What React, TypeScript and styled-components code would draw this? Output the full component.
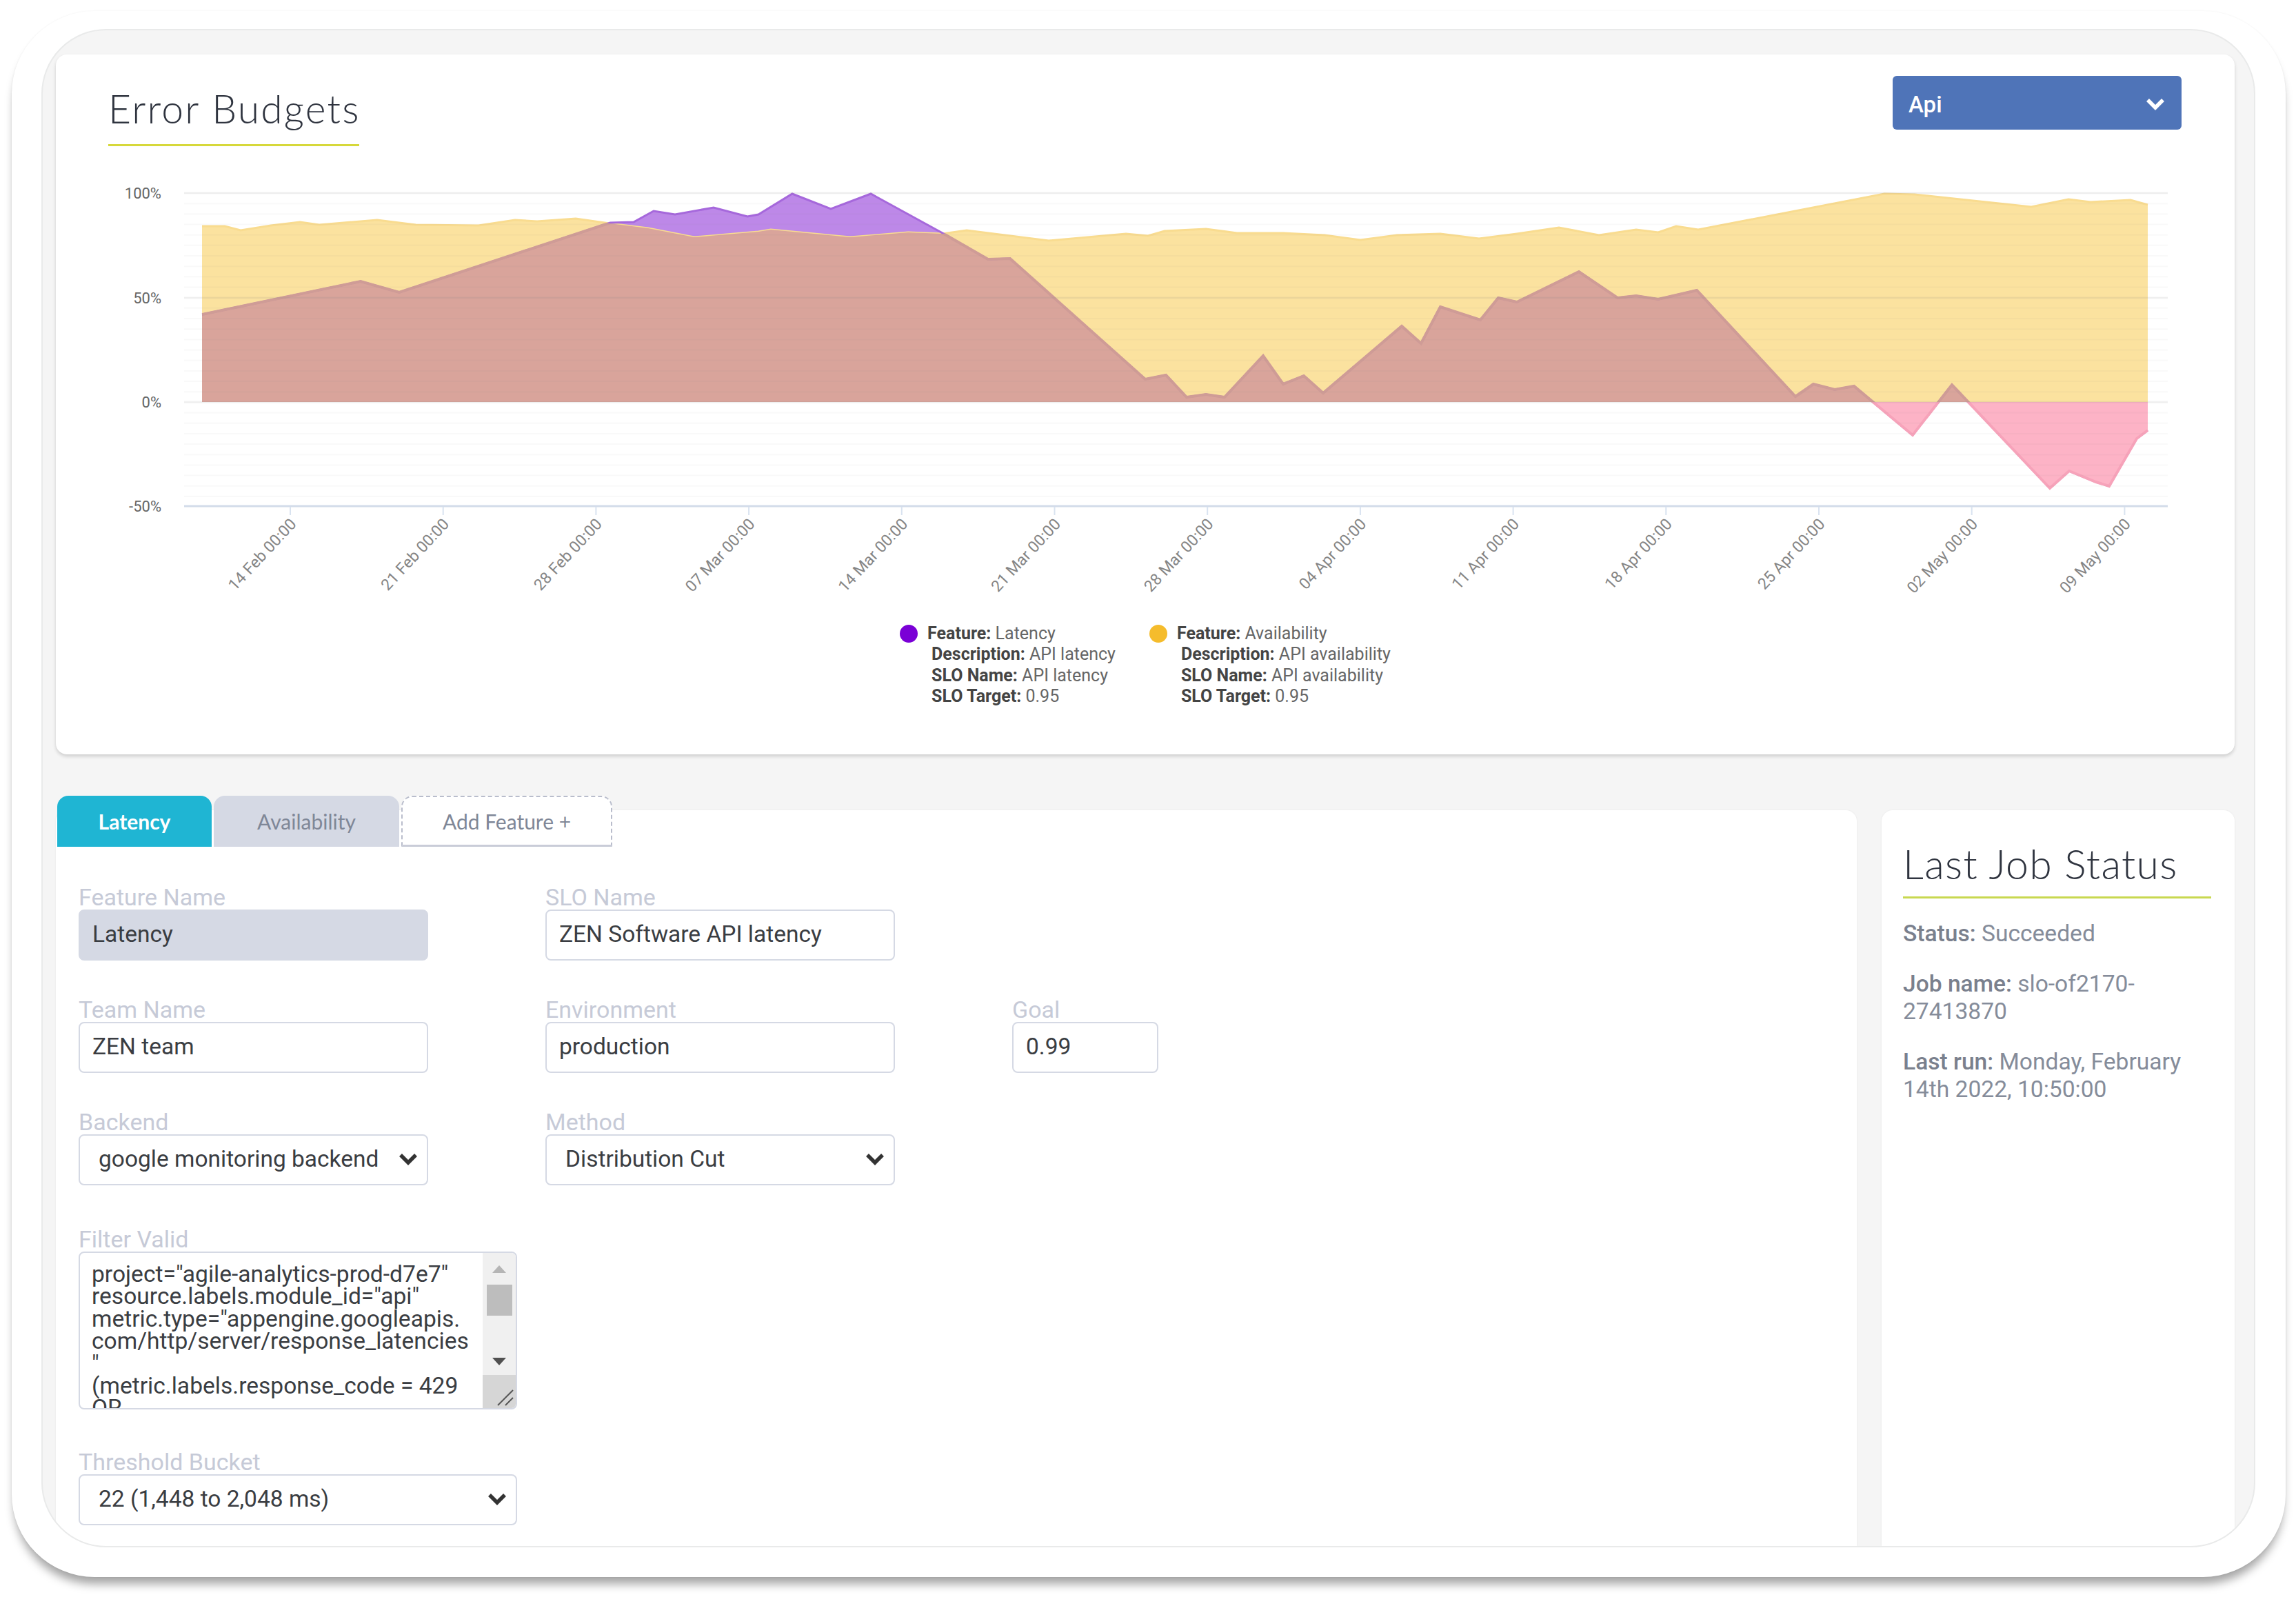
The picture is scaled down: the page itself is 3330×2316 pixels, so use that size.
import styled, { createGlobalStyle } from 'styled-components';

const GlobalStyle = createGlobalStyle`
  html, body {
    margin: 0;
    padding: 0;
    height: 2316px;
    background: #fff;
    overflow: hidden;
  }
  * {
    box-sizing: border-box;
  }
`;

const TITLE_FONT = `Lato, "Noto Sans", sans-serif`;
const BODY_FONT = `Roboto, "Liberation Sans", sans-serif`;

// chart data is in page pixels, the svg viewBox lines them up
const ZERO_Y = 583;
const END_X = 3115;

const availability = [
  [293, 328], [326, 328], [349, 334], [393, 327], [435, 322], [463, 326], [547, 319], [603, 326],
  [694, 327], [747, 319], [779, 321], [835, 317], [884, 324], [940, 331], [1007, 344], [1100, 336],
  [1118, 333], [1233, 344], [1317, 337], [1367, 339], [1402, 334], [1521, 349], [1633, 339],
  [1665, 342], [1689, 335], [1749, 332], [1794, 338], [1861, 338], [1921, 341], [1973, 348],
  [2026, 341], [2089, 339], [2145, 346], [2200, 339], [2261, 330], [2319, 341], [2373, 333],
  [2405, 337], [2431, 328], [2463, 333], [2733, 281], [2777, 282], [2946, 300], [3000, 289],
  [3032, 293], [3090, 290], [3115, 297],
];

const latency = [
  [293, 456], [523, 408], [579, 424], [885, 323], [919, 322], [948, 306], [979, 311], [1035, 301],
  [1084, 314], [1100, 311], [1149, 281], [1205, 303], [1263, 281], [1367, 338], [1433, 376],
  [1465, 375], [1661, 550], [1691, 544], [1721, 576], [1749, 572], [1776, 576], [1832, 516],
  [1861, 557], [1891, 545], [1919, 570], [2033, 473], [2061, 498], [2089, 445], [2147, 464],
  [2173, 432], [2200, 438], [2290, 394], [2346, 432], [2373, 429], [2405, 434], [2461, 421],
  [2604, 575], [2630, 557], [2661, 565], [2689, 560], [2774, 631], [2831, 558], [2973, 708],
  [3001, 683], [3040, 699], [3059, 705], [3099, 636], [3115, 624],
];

const toLine = (pts: number[][]) => pts.map((p) => p.join(',')).join(' ');
const toArea = (pts: number[][]) =>
  `${pts[0][0]},${ZERO_Y} ${toLine(pts)} ${END_X},${ZERO_Y}`;

const dates = [
  '14 Feb', '21 Feb', '28 Feb', '07 Mar', '14 Mar', '21 Mar', '28 Mar',
  '04 Apr', '11 Apr', '18 Apr', '25 Apr', '02 May', '09 May',
];

const yLabels = [
  { y: 280, text: '100%' },
  { y: 432, text: '50%' },
  { y: 583, text: '0%' },
  { y: 734, text: '-50%' },
];

const minorLines = Array.from({ length: 30 }, (_, i) => 280 + i * 15.17);

function BudgetChart() {
  return (
    <ChartSvg viewBox="81 212 3160 680" width="3160" height="680">
      <defs>
        <clipPath id="inAvailability">
          <polygon points={toArea(availability)} />
        </clipPath>
        <clipPath id="belowZero">
          <rect x="200" y={ZERO_Y} width="3000" height="200" />
        </clipPath>
      </defs>

      <polygon points={toArea(latency)} fill="#bd88e8" />
      <polygon points={toArea(availability)} fill="#fbe29f" />
      <polyline points={toLine(availability)} fill="none" stroke="#f9dc90" strokeWidth="3" />
      <g clipPath="url(#inAvailability)">
        <polygon points={toArea(latency)} fill="#d9a49b" />
      </g>
      <polyline points={toLine(latency)} fill="none" stroke="#a668dc" strokeWidth="3" />
      <g clipPath="url(#inAvailability)">
        <polyline points={toLine(latency)} fill="none" stroke="#cf9c96" strokeWidth="4" />
      </g>
      <g clipPath="url(#belowZero)">
        <polygon points={toArea(latency)} fill="#fdb3c6" />
        <polyline points={toLine(latency)} fill="none" stroke="#f7a3ba" strokeWidth="4" />
      </g>

      {minorLines.map((y) => (
        <line key={y} x1="267" x2="3144" y1={y} y2={y} stroke="#8a8a8a" strokeOpacity="0.05" strokeWidth="2" />
      ))}
      {yLabels.slice(0, 3).map((l) => (
        <line key={l.y} x1="267" x2="3144" y1={l.y} y2={l.y} stroke="#8a8a8a" strokeOpacity="0.09" strokeWidth="3" />
      ))}
      <line x1="267" x2="3144" y1="734" y2="734" stroke="#d3dcea" strokeWidth="3" />

      {yLabels.map((l) => (
        <text key={l.y} x="234" y={l.y + 8} textAnchor="end" fontFamily={BODY_FONT} fontSize="22" fill="#666">
          {l.text}
        </text>
      ))}

      {dates.map((d, i) => {
        const x = 421 + i * 221.7;
        return (
          <g key={d}>
            <line x1={x} x2={x} y1="735" y2="747" stroke="#d9e3f0" strokeWidth="2" />
            <text
              x={x + 10}
              y="761"
              textAnchor="end"
              fontFamily={BODY_FONT}
              fontSize="23"
              fill="#858585"
              transform={`rotate(-47 ${x + 10} 761)`}
            >
              {d} 00:00
            </text>
          </g>
        );
      })}
    </ChartSvg>
  );
}

function Chevron({ color = '#333' }: { color?: string }) {
  return (
    <svg width="28" height="18" viewBox="0 0 28 18">
      <polyline points="3,3 14,14 25,3" fill="none" stroke={color} strokeWidth="5.5" />
    </svg>
  );
}

const legendItems = [
  { color: '#7a00d6', feature: 'Latency', description: 'API latency' },
  { color: '#f5bc2c', feature: 'Availability', description: 'API availability' },
];

const filterText = `project="agile-analytics-prod-d7e7"
resource.labels.module_id="api"
metric.type="appengine.googleapis.
com/http/server/response_latencies
"
(metric.labels.response_code = 429
OR`;

export default function App() {
  return (
    <>
      <GlobalStyle />
      <OuterFrame>
        <InnerFrame>
          <TopCard>
            <Header>
              <PageTitle>Error Budgets</PageTitle>
              <ServiceSelect>
                Api
                <Chevron color="#fff" />
              </ServiceSelect>
            </Header>
            <BudgetChart />
            <Legend>
              {legendItems.map((item) => (
                <LegendItem key={item.feature}>
                  <LegendFirstRow>
                    <LegendDot $color={item.color} />
                    <span>
                      <b>Feature:</b> {item.feature}
                    </span>
                  </LegendFirstRow>
                  <LegendRow>
                    <b>Description:</b> {item.description}
                  </LegendRow>
                  <LegendRow>
                    <b>SLO Name:</b> {item.description}
                  </LegendRow>
                  <LegendRow>
                    <b>SLO Target:</b> 0.95
                  </LegendRow>
                </LegendItem>
              ))}
            </Legend>
          </TopCard>

          <LowerRow>
            <FormCard>
              <TabBar>
                <Tab $kind="active">Latency</Tab>
                <Tab $kind="idle">Availability</Tab>
                <Tab $kind="add">Add Feature +</Tab>
              </TabBar>
              <FormGrid>
                <Field>
                  <Label>Feature Name</Label>
                  <Input $disabled>Latency</Input>
                </Field>
                <Field>
                  <Label>SLO Name</Label>
                  <Input>ZEN Software API latency</Input>
                </Field>
                <span />
                <Field>
                  <Label>Team Name</Label>
                  <Input>ZEN team</Input>
                </Field>
                <Field>
                  <Label>Environment</Label>
                  <Input>production</Input>
                </Field>
                <Field>
                  <Label>Goal</Label>
                  <Input>0.99</Input>
                </Field>
                <Field>
                  <Label>Backend</Label>
                  <SelectBox>
                    google monitoring backend
                    <Chevron />
                  </SelectBox>
                </Field>
                <Field>
                  <Label>Method</Label>
                  <SelectBox>
                    Distribution Cut
                    <Chevron />
                  </SelectBox>
                </Field>
              </FormGrid>
              <WideFields>
                <Field>
                  <Label>Filter Valid</Label>
                  <TextAreaBox>
                    <TextAreaBody>{filterText}</TextAreaBody>
                    <ScrollBar>
                      <ScrollTrack>
                        <ScrollArrow $up />
                        <ScrollThumb />
                        <ScrollSpacer />
                        <ScrollArrow />
                      </ScrollTrack>
                      <ResizeCorner>
                        <svg width="26" height="26" viewBox="0 0 26 26">
                          <path d="M3 25L25 3M14 25L25 14" stroke="#555" strokeWidth="2" />
                        </svg>
                      </ResizeCorner>
                    </ScrollBar>
                  </TextAreaBox>
                </Field>
                <Field>
                  <Label>Threshold Bucket</Label>
                  <SelectBox>
                    22 (1,448 to 2,048 ms)
                    <Chevron />
                  </SelectBox>
                </Field>
              </WideFields>
            </FormCard>

            <StatusCard>
              <StatusTitle>Last Job Status</StatusTitle>
              <StatusText>
                <b>Status:</b> Succeeded
              </StatusText>
              <StatusText>
                <b>Job name:</b> slo-of2170-27413870
              </StatusText>
              <StatusText>
                <b>Last run:</b> Monday, February 14th 2022, 10:50:00
              </StatusText>
            </StatusCard>
          </LowerRow>
        </InnerFrame>
      </OuterFrame>
    </>
  );
}

const OuterFrame = styled.div`
  width: 3298px;
  height: 2271px;
  margin: 16px 0 0 17px;
  padding: 26px 44px 43px 43px;
  background: #fff;
  border-radius: 120px;
  box-shadow: 0 14px 14px -4px rgba(0, 0, 0, 0.36), 0 0 3px rgba(0, 0, 0, 0.06);
`;

const InnerFrame = styled.div`
  height: 100%;
  display: flex;
  flex-direction: column;
  padding: 35px 28px 0 19px;
  background: #f5f5f5;
  border: 2px solid #e9eaea;
  border-radius: 94px;
  overflow: hidden;
`;

const TopCard = styled.div`
  flex: none;
  height: 1015px;
  background: #fff;
  border-radius: 16px;
  box-shadow: 0 3px 5px rgba(0, 0, 0, 0.16);
`;

const Header = styled.div`
  height: 133px;
  display: flex;
  justify-content: space-between;
  align-items: flex-start;
  padding: 31px 77px 0 76px;
`;

const PageTitle = styled.div`
  width: 364px;
  height: 102px;
  padding-top: 14px;
  border-bottom: 3px solid #d6d83a;
  font-family: ${TITLE_FONT};
  font-weight: 300;
  font-size: 57px;
  line-height: 66px;
  letter-spacing: 2.2px;
  color: #2f343f;
  white-space: nowrap;
`;

const ServiceSelect = styled.div`
  width: 419px;
  height: 78px;
  display: flex;
  justify-content: space-between;
  align-items: center;
  padding: 4px 24px 0 23px;
  background: #4f74b8;
  border-radius: 6px;
  font-family: ${BODY_FONT};
  font-weight: 500;
  font-size: 33px;
  color: #fff;
`;

const ChartSvg = styled.svg`
  display: block;
`;

const Legend = styled.div`
  display: flex;
  justify-content: center;
  gap: 49px;
  margin-top: 12px;
  font-family: ${BODY_FONT};
  font-size: 25px;
  line-height: 30.3px;
  color: #666;

  b {
    font-weight: 700;
    color: #444;
  }
`;

const LegendItem = styled.div`
  display: flex;
  flex-direction: column;
`;

const LegendFirstRow = styled.div`
  display: flex;
  align-items: center;
  gap: 14px;
`;

const LegendDot = styled.span<{ $color: string }>`
  width: 26px;
  height: 26px;
  border-radius: 50%;
  background: ${(p) => p.$color};
`;

const LegendRow = styled.div`
  padding-left: 46px;
  white-space: nowrap;
`;

const LowerRow = styled.div`
  flex: 1;
  display: flex;
  gap: 36px;
  margin-top: 81px;
  min-height: 0;
`;

const FormCard = styled.div`
  width: 2612px;
  background: #fff;
  border-radius: 16px 16px 0 0;
  box-shadow: 0 0 3px rgba(0, 0, 0, 0.06);
`;

const TabBar = styled.div`
  display: flex;
  gap: 3px;
  margin-top: -21px;
  padding-left: 2px;
`;

const tabStyles = {
  active: 'width: 224px; background: #1fb5d3; color: #fff; font-weight: 700;',
  idle: 'width: 269px; background: #d5d9e4; color: #7f8797;',
  add: 'width: 306px; background: #fff; color: #7f8797; border: 2px dashed #b9bdcc; border-bottom: 3px solid #c9ccd8;',
};

const Tab = styled.div<{ $kind: keyof typeof tabStyles }>`
  height: 74px;
  display: flex;
  align-items: center;
  justify-content: center;
  border-radius: 16px 16px 0 0;
  font-family: ${TITLE_FONT};
  font-size: 30px;
  ${(p) => tabStyles[p.$kind]}
`;

const FormGrid = styled.div`
  display: grid;
  grid-template-columns: 507px 507px 212px;
  column-gap: 170px;
  row-gap: 53px;
  padding: 55px 0 0 33px;
`;

const WideFields = styled.div`
  width: 669px;
  display: flex;
  flex-direction: column;
  gap: 58px;
  padding: 60px 0 0 33px;
`;

const Field = styled.div`
  display: flex;
  flex-direction: column;
`;

const Label = styled.div`
  height: 36px;
  font-family: ${BODY_FONT};
  font-size: 34px;
  line-height: 36px;
  color: #c6cad7;
  white-space: nowrap;
`;

const Input = styled.div<{ $disabled?: boolean }>`
  height: 74px;
  display: flex;
  align-items: center;
  padding: 0 18px 3px;
  border: 2px solid #d5d9e4;
  border-radius: 8px;
  background: ${(p) => (p.$disabled ? '#d5d9e4' : '#fff')};
  font-family: ${BODY_FONT};
  font-size: 33.5px;
  color: #3a3d42;
`;

const SelectBox = styled(Input)`
  justify-content: space-between;
  padding: 0 13px 3px 27px;
`;

const TextAreaBox = styled.div`
  height: 229px;
  display: flex;
  border: 2px solid #d5d9e4;
  border-radius: 8px;
  overflow: hidden;
`;

const TextAreaBody = styled.div`
  flex: 1;
  padding: 15px 0 0 17px;
  overflow: hidden;
  white-space: pre;
  font-family: ${BODY_FONT};
  font-size: 33.6px;
  line-height: 32.4px;
  color: #3a3d42;
`;

const ScrollBar = styled.div`
  flex: none;
  width: 48px;
  display: flex;
  flex-direction: column;
`;

const ScrollTrack = styled.div`
  flex: 1;
  display: flex;
  flex-direction: column;
  align-items: center;
  padding: 18px 0 14px;
  background: #f0f0f0;
`;

const ScrollArrow = styled.div<{ $up?: boolean }>`
  width: 0;
  height: 0;
  border-left: 10px solid transparent;
  border-right: 10px solid transparent;
  ${(p) =>
    p.$up ? 'border-bottom: 11px solid #b5b5b5;' : 'border-top: 11px solid #505050;'}
`;

const ScrollThumb = styled.div`
  width: 37px;
  height: 45px;
  margin-top: 17px;
  background: #bdbdbd;
`;

const ScrollSpacer = styled.div`
  flex: 1;
`;

const ResizeCorner = styled.div`
  height: 48px;
  display: flex;
  align-items: flex-end;
  justify-content: flex-end;
  padding: 0 3px 3px 0;
  background: #d6d6d6;
`;

const StatusCard = styled.div`
  flex: 1;
  padding: 30px 34px 0 31px;
  background: #fff;
  border-radius: 16px 16px 0 0;
  box-shadow: 0 0 3px rgba(0, 0, 0, 0.06);
`;

const StatusTitle = styled.div`
  height: 98px;
  padding-top: 15px;
  margin-bottom: 31px;
  border-bottom: 3px solid #c8d850;
  font-family: ${TITLE_FONT};
  font-weight: 300;
  font-size: 59px;
  line-height: 66px;
  letter-spacing: 1.3px;
  color: #2f343f;
  white-space: nowrap;
`;

const StatusText = styled.p`
  margin: 0 0 33px;
  font-family: ${BODY_FONT};
  font-size: 33.6px;
  line-height: 40px;
  color: #858c9a;

  b {
    font-weight: 500;
    color: #7a808d;
  }
`;
